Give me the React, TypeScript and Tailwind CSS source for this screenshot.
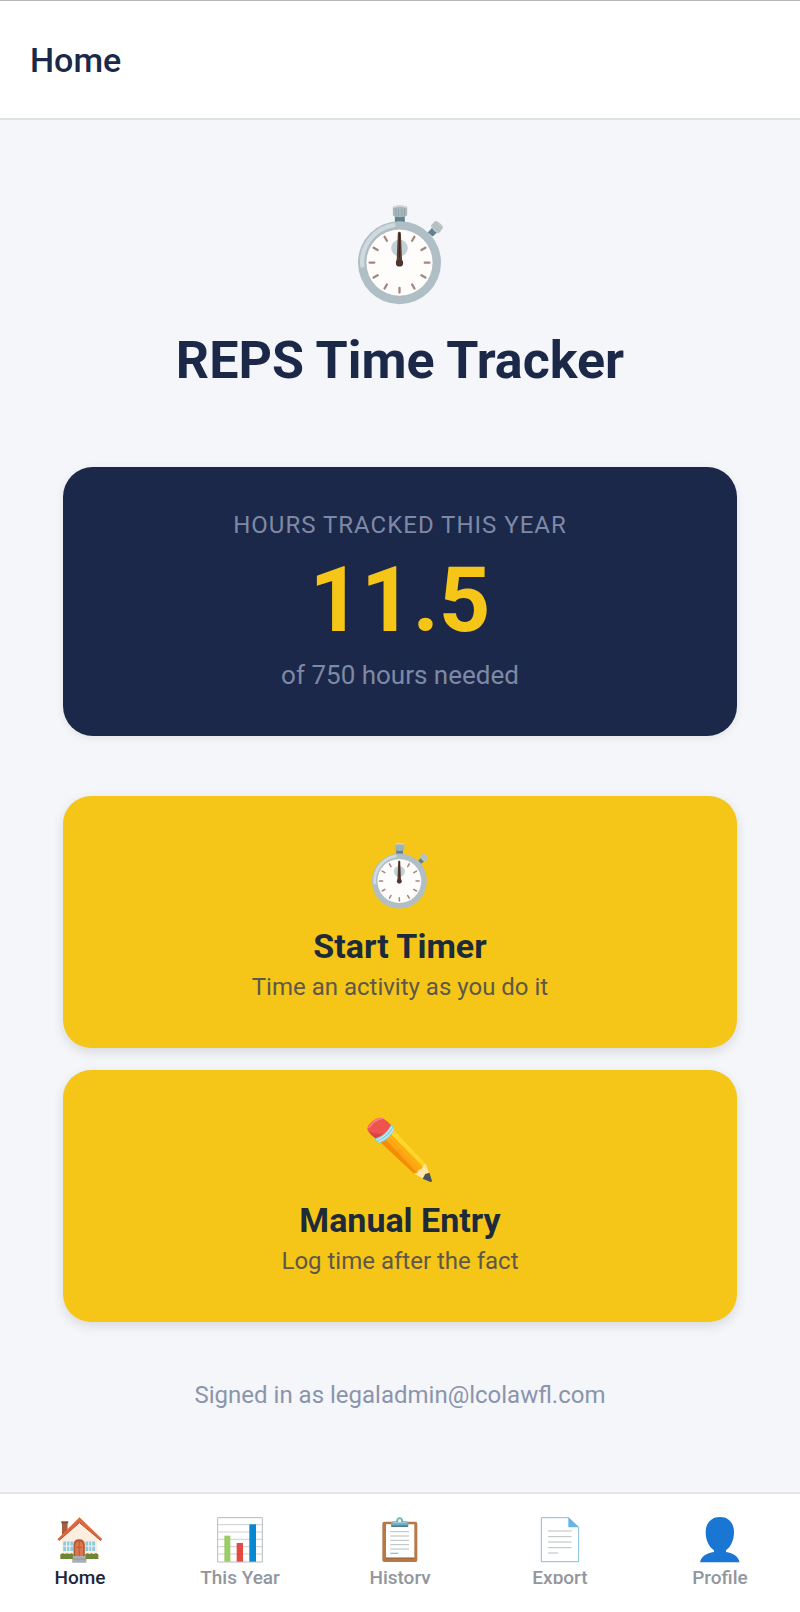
import type { ReactNode } from 'react';

const TICKS = [30, 60, 90, 120, 150, 180, 210, 240, 270, 300, 330];

function Stopwatch({ className }: { className: string }) {
  return (
    <svg viewBox="50 30 262 300" className={className} aria-hidden="true">
      <path d="M164 56h30v30h-30z" fill="#60818d" />
      <path d="M158 36q2-5 21-5t22 5v24q-4 6-22 6t-21-6z" fill="#a9b8bd" />
      <path d="M167 40v22M175 41v23M185 41v23M193 40v22" stroke="#869aa2" strokeWidth="2" />
      <path d="M160 36q19-7 39 0" stroke="#d3dadd" strokeWidth="5" fill="none" />
      <path d="M263 112l16-17 15 14-16 15z" fill="#60818d" />
      <path d="M272 92l14-15q14 3 24 20l-15 19q-16-7-23-24z" fill="#bcc5c8" />
      <path d="M279 86q7 15 22 23M283 80q8 14 23 22" stroke="#9eaaae" strokeWidth="2" fill="none" />
      <circle cx="178" cy="203" r="125" fill="#b0bec5" />
      <path d="M66 212A113 113 0 0 1 160 90" stroke="#d0dade" strokeWidth="13" strokeLinecap="round" fill="none" />
      <circle cx="178" cy="203" r="101" fill="#fffdfc" stroke="#a3b0b6" strokeWidth="2" />
      <circle cx="178" cy="159" r="25" fill="#c3d0d5" />
      {TICKS.map((angle) => (
        <path
          key={angle}
          d="M178 113v14"
          transform={`rotate(${angle} 178 203)`}
          stroke="#a1887f"
          strokeWidth="7"
          strokeLinecap="round"
        />
      ))}
      <path d="M173 113q5-6 9 0l4 92h-17z" fill="#5d4037" />
      <path d="M178 113v76" stroke="#40251d" strokeWidth="4" />
      <circle cx="178" cy="204" r="11" fill="#4e342e" />
    </svg>
  );
}

function Pencil({ className }: { className: string }) {
  return (
    <svg viewBox="34 34 204 204" className={className} aria-hidden="true">
      <path d="M76 113l42-39 98 105 7 24-12 9-32-3z" fill="#ffb510" />
      <path d="M76 113l14-13 101 108-12 1z" fill="#f68b04" />
      <path d="M88 101l11-10 101 105-9 12z" fill="#ffa414" />
      <path d="M106 85l12-11 98 105-7 9z" fill="#ffd52e" />
      <path d="M89 101l98 105M104 87l98 105" stroke="#e79b0b" strokeWidth="2" />
      <path d="M179 209l10-2 5-10 10-3 3-10 9-5 18 53q-5 5-10 2z" fill="#ffe6a8" />
      <path d="M206 225l8-15 13-4 8 26q-1 4-6 3z" fill="#4a5257" />
      <path d="M57 101q29-7 51-44 11 7 10 17-15 30-43 40-12-1-18-13z" fill="#82ccda" />
      <path d="M62 105q29-8 50-43M69 111q31-11 48-42" stroke="#c6e9ee" strokeWidth="4" fill="none" />
      <path d="M38 78q-8-11 6-25 18-17 32-17 14 2 32 23-16 32-48 41-14-7-22-22z" fill="#ef5350" />
      <path d="M40 66q17-25 42-28" stroke="#f98683" strokeWidth="5" fill="none" strokeLinecap="round" />
      <path d="M38 78l22 22q17-5 25-15Q61 89 38 78z" fill="#d9414d" />
    </svg>
  );
}

function House() {
  return (
    <svg viewBox="173 111 137 139" className="h-[46px] w-[46px]" aria-hidden="true">
      <path d="M187 126h17v38h-17z" fill="#a5603f" />
      <path d="M185 124h21v6h-21z" fill="#814b36" />
      <path d="M188 174l52-48 54 48v64H188z" fill="#fcefdf" />
      <path d="M173 178l67-66 69 66-5 5-64-55-62 55z" fill="#e1683e" />
      <path d="M178 182l62-54 64 54" stroke="#b4532f" strokeWidth="3" fill="none" />
      <path d="M191 185h30v29h-30zM258 185h29v29h-29z" fill="#8fc9dc" />
      <path d="M191 199h30M201 185v29M211 185v29M258 199h29M268 185v29M277 185v29" stroke="#f3f5f2" strokeWidth="3" />
      <path d="M182 224q8-6 14-1 7-5 13 0 7-5 13 1v14h-40zM257 224q6-6 13-1 6-5 12 0 8-5 15 1v14h-40z" fill="#6d8735" />
      <path d="M222 230v-35q0-17 17-17t17 17v35z" fill="#b9532e" />
      <path d="M227 230v-33q0-13 12-13t12 13v33z" fill="#da7650" />
      <path d="M239 184v44M231 203h16" stroke="#b65b3d" strokeWidth="3" />
      <path d="M220 229h38v9h3v11h-43v-11h2z" fill="#aaafb3" />
      <path d="M219 238h41" stroke="#878f94" strokeWidth="2" />
    </svg>
  );
}

function BarChart() {
  return (
    <svg viewBox="651 111 138 138" className="h-[46px] w-[46px]" aria-hidden="true">
      <path d="M653 113h134v133H653z" fill="#fff" stroke="#b4bcc0" strokeWidth="3" />
      <path d="M654 134h132M654 156h132M654 178h132M654 200h132M654 222h132" stroke="#cbd0d2" strokeWidth="3" />
      <path d="M673 167h18v78h-18z" fill="#9ccc65" />
      <path d="M710 189h19v56h-19z" fill="#e54a40" />
      <path d="M748 133h20v112h-20z" fill="#0788d1" />
    </svg>
  );
}

function Clipboard() {
  return (
    <svg viewBox="81 111 138 138" className="h-[46px] w-[46px]" aria-hidden="true">
      <rect x="97" y="125" width="105" height="121" rx="6" fill="#b87845" />
      <path d="M108 133h85v101h-85z" fill="#fff" />
      <path d="M108 234h85" stroke="#8d5833" strokeWidth="3" />
      <path d="M121 155h56M121 168h56M121 181h56M121 194h56M121 207h56" stroke="#b7bec1" strokeWidth="3" />
      <path d="M121 220h24" stroke="#95bddb" strokeWidth="4" />
      <path d="M123 140v-11q1-5 10-5h5q2-12 11-12t11 12h5q10 0 10 5v11z" fill="#75aebf" />
      <path d="M124 136h50v5h-50z" fill="#497f91" />
      <circle cx="149" cy="122" r="5" fill="#e9f3f4" />
      <path d="M129 128h39" stroke="#a7d1db" strokeWidth="3" />
    </svg>
  );
}

function Page() {
  return (
    <svg viewBox="561 111 138 138" className="h-[46px] w-[46px]" aria-hidden="true">
      <path d="M574 113h82l30 29v103H574z" fill="#fff" stroke="#81bedb" strokeWidth="3" />
      <path d="M655 112l32 30h-32z" fill="#64b5e8" />
      <path d="M594 153h71M594 170h71M594 186h71M594 203h71M594 219h31" stroke="#b9bfc2" strokeWidth="3" />
    </svg>
  );
}

function Person() {
  return (
    <svg viewBox="171 110 138 138" className="h-[46px] w-[46px]" aria-hidden="true">
      <path
        d="M240 110c26 0 42 18 42 46 0 24-10 44-24 54v5c22 3 37 13 41 31H180c4-18 19-28 42-31v-5c-15-10-25-30-25-54 0-28 17-46 43-46z"
        fill="#1976d2"
      />
    </svg>
  );
}

function ActionCard({ icon, title, note }: { icon: ReactNode; title: string; note: string }) {
  return (
    <button
      type="button"
      className="flex w-full flex-col items-center rounded-[28px] bg-[#f5c518] pt-[47px] pb-[45px] shadow-[0_4px_12px_rgba(0,0,0,0.12)]"
    >
      {icon}
      <span className="mt-[17px] text-[34px] leading-10 font-bold text-[#1c2a3a]">{title}</span>
      <span className="mt-[5px] text-2xl text-[#5d584a]">{note}</span>
    </button>
  );
}

const TABS = [
  { label: 'Home', icon: <House />, active: true },
  { label: 'This Year', icon: <BarChart />, active: false },
  { label: 'History', icon: <Clipboard />, active: false },
  { label: 'Export', icon: <Page />, active: false },
  { label: 'Profile', icon: <Person />, active: false },
];

export default function App() {
  return (
    <div className="flex min-h-screen flex-col bg-[#f4f6fa] font-['Roboto',sans-serif]">
      <header className="border-t border-b-2 border-t-[#b9b9bb] border-b-[#dfe1e5] bg-white px-[30px] pt-[39px] pb-[38px]">
        <h1 className="text-[34px] leading-10 font-medium text-[#1b2848]">Home</h1>
      </header>

      <main className="flex grow flex-col items-center px-[63px] pt-[85px]">
        <Stopwatch className="h-[100px] w-[87px]" />
        <h2 className="mt-6 text-[52px] leading-16 font-bold text-[#1b2848]">REPS Time Tracker</h2>

        <section className="mt-[74px] flex w-full flex-col items-center rounded-[30px] bg-[#1b2849] pt-[42px] pb-[45px] shadow-[0_2px_8px_rgba(0,0,0,0.08)]">
          <p className="text-2xl tracking-[1px] text-[#7e89a5] uppercase">Hours tracked this year</p>
          <p className="mt-3 text-[90px] leading-[96px] font-bold text-[#f5c518]">11.5</p>
          <p className="mt-[10px] text-[26px] leading-8 text-[#7e89a5]">of 750 hours needed</p>
        </section>

        <div className="mt-[60px] flex w-full flex-col gap-[22px]">
          <ActionCard
            icon={<Stopwatch className="h-[66px] w-[58px]" />}
            title="Start Timer"
            note="Time an activity as you do it"
          />
          <ActionCard
            icon={<Pencil className="h-[66px] w-[66px]" />}
            title="Manual Entry"
            note="Log time after the fact"
          />
        </div>

        <p className="mt-[57px] text-2xl text-[#8b94aa]">Signed in as legaladmin@lcolawfl.com</p>
      </main>

      <nav className="flex border-t-2 border-[#e3e5e9] bg-white pt-[23px] pb-7">
        {TABS.map((tab) => (
          <a
            key={tab.label}
            href="#"
            aria-current={tab.active ? 'page' : undefined}
            className={`flex flex-1 flex-col items-center text-[19px] font-medium ${
              tab.active ? 'text-[#1c2738]' : 'text-[#92969d]'
            }`}
          >
            {tab.icon}
            <span className="mt-1 h-[17px] overflow-hidden leading-[22px]">{tab.label}</span>
          </a>
        ))}
      </nav>
    </div>
  );
}
